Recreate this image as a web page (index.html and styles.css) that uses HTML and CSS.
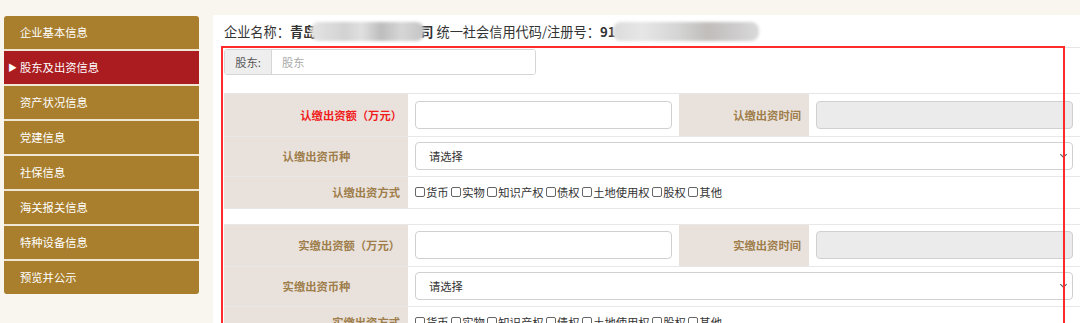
FILE: index.html
```html
<!DOCTYPE html>
<html lang="zh-CN">
<head>
  <meta charset="UTF-8" />
  <title>股东及出资信息</title>
  <link rel="stylesheet" href="styles.css">
</head>
<body>
  <nav class="menu">
    <a class="item">企业基本信息</a>
    <a class="item active">股东及出资信息</a>
    <a class="item">资产状况信息</a>
    <a class="item">党建信息</a>
    <a class="item">社保信息</a>
    <a class="item">海关报关信息</a>
    <a class="item">特种设备信息</a>
    <a class="item">预览并公示</a>
  </nav>

  <main class="panel">
    <div class="company">
      企业名称：<b>青岛</b><span class="blur blur-name"></span><b>司</b> 统一社会信用代码/注册号：<b>91</b><span class="blur blur-code"></span>
    </div>

    <div class="holder-row">
      <div class="holder">
        <span class="addon">股东:</span>
        <input type="text" placeholder="股东">
      </div>
    </div>

    <table class="form">
      <colgroup>
        <col style="width:184px">
        <col style="width:271px">
        <col style="width:130px">
        <col>
      </colgroup>
      <tr class="r1">
        <th class="req">认缴出资额（万元）</th>
        <td><input type="text"></td>
        <th>认缴出资时间</th>
        <td><input type="text" disabled></td>
      </tr>
      <tr class="r2">
        <th class="mid">认缴出资币种</th>
        <td colspan="3"><div class="select">请选择<span class="caret"></span></div></td>
      </tr>
      <tr class="r3">
        <th>认缴出资方式</th>
        <td colspan="3" class="checks">
          <label><i></i>货币</label> <label><i></i>实物</label> <label><i></i>知识产权</label> <label><i></i>债权</label> <label><i></i>土地使用权</label> <label><i></i>股权</label> <label><i></i>其他</label>
        </td>
      </tr>
      <tr class="gap"><td colspan="4"></td></tr>
      <tr class="r1">
        <th>实缴出资额（万元）</th>
        <td><input type="text"></td>
        <th>实缴出资时间</th>
        <td><input type="text" disabled></td>
      </tr>
      <tr class="r2">
        <th class="mid">实缴出资币种</th>
        <td colspan="3"><div class="select">请选择<span class="caret"></span></div></td>
      </tr>
      <tr class="r3">
        <th>实缴出资方式</th>
        <td colspan="3" class="checks">
          <label><i></i>货币</label> <label><i></i>实物</label> <label><i></i>知识产权</label> <label><i></i>债权</label> <label><i></i>土地使用权</label> <label><i></i>股权</label> <label><i></i>其他</label>
        </td>
      </tr>
    </table>

    <div class="mark"></div>
  </main>
</body>
</html>
```

FILE: styles.css
```css
body {
  margin: 0;
  background: #f9f6ef;
  font-family: "Noto Sans CJK SC", "Liberation Sans", sans-serif;
  font-size: 11.3px;
  color: #333;
  display: flex;
  align-items: flex-start;
  height: 323px;
  overflow: hidden;
}
.menu {
  width: 195px;
  margin: 16px 0 0 4px;
  display: flex;
  flex-direction: column;
  gap: 2px;
  background: #efe6d3;
  border-radius: 3px;
  overflow: hidden;
}
.item {
  display: block;
  height: 33px;
  line-height: 33px;
  padding-left: 16px;
  background: #a97f2e;
  color: #fff;
  font-size: 11.3px;
}
.item.active {
  background: #aa1c1f;
  padding-left: 4px;
}
.item.active::before {
  content: "▶";
  font-size: 9px;
  margin-right: 3px;
  position: relative;
  top: -1px;
}
.panel {
  flex: 1;
  margin: 15px 0 0 14px;
  background: #fff;
  height: 320px;
  padding-left: 11px;
  position: relative;
}
.company {
  height: 32px;
  line-height: 34px;
  font-size: 13.2px;
  color: #333;
  border-bottom: 1px solid #e6e6e6;
  white-space: nowrap;
}
.company b { font-weight: bold; }
.blur {
  display: inline-block;
  height: 19px;
  vertical-align: -4px;
  border-radius: 8px;
  filter: blur(1.5px);
  position: relative;
}
.blur-name {
  width: 113px;
  margin: 0 -4px 0 -5px;
  background: linear-gradient(90deg, #e4e4e4 0%, #d2d2d2 30%, #e0e0e0 45%, #bdbdbd 62%, #d6d6d6 80%, #c4c4c4 100%);
}
.blur-code {
  width: 146px;
  margin-left: -2px;
  background: linear-gradient(90deg, #dcdcdc 0%, #e6e6e6 20%, #d4d4d4 45%, #c0bdbb 65%, #cac8c8 80%, #dadada 100%);
}
.holder-row {
  height: 44px;
  border-bottom: 1px solid #e6e6e6;
  padding-top: 1px;
}
.holder {
  display: flex;
  width: 312px;
  height: 26px;
  border: 1px solid #d6d6d6;
  border-radius: 3px;
  box-sizing: border-box;
  overflow: hidden;
}
.addon {
  width: 46px;
  background: #eee;
  border-right: 1px solid #d6d6d6;
  color: #555;
  text-align: center;
  line-height: 24px;
}
.holder input {
  flex: 1;
  border: none;
  outline: none;
  padding-left: 10px;
  font: inherit;
  color: #333;
}
.holder input::placeholder { color: #aaa; }
.form {
  width: 856px;
  border-collapse: collapse;
  table-layout: fixed;
}
.form th {
  background: #e9e2dc;
  color: #9e7d4a;
  font-weight: bold;
  text-align: right;
  padding-right: 8px;
  font-size: 11.3px;
}
.form th.mid { text-align: center; padding-right: 0; }
.form th.req { color: #f01d1d; padding-right: 6px; }
.form tr { border-bottom: 1px solid #e8e8e8; }
.form td { padding: 0 7px; }
.r1 { height: 42px; }
.r2 { height: 40px; }
.r3 { height: 32px; }
.gap { height: 16px; }
.form input {
  width: 100%;
  height: 28px;
  box-sizing: border-box;
  border: 1px solid #d0d0d0;
  border-radius: 4px;
  background: #fff;
  display: block;
}
.form input:disabled { background: #ebebeb; }
.select {
  height: 28px;
  box-sizing: border-box;
  border: 1px solid #d0d0d0;
  border-radius: 4px;
  line-height: 26px;
  padding-left: 13px;
  color: #333;
  position: relative;
}
.caret {
  position: absolute;
  right: 6px;
  top: 9px;
  width: 4px;
  height: 4px;
  border-right: 1px solid #555;
  border-bottom: 1px solid #555;
  transform: rotate(45deg);
}
.checks { color: #333; font-size: 11.3px; white-space: nowrap; }
.checks label { display: inline-flex; align-items: center; }
.checks i {
  display: inline-block;
  width: 8px;
  height: 8px;
  border: 1px solid #666;
  border-radius: 2px;
  margin-right: 1px;
}
.mark {
  position: absolute;
  left: 8px;
  top: 31px;
  width: 840px;
  height: 300px;
  border: 2px solid #ff2b2b;
  pointer-events: none;
}
```
